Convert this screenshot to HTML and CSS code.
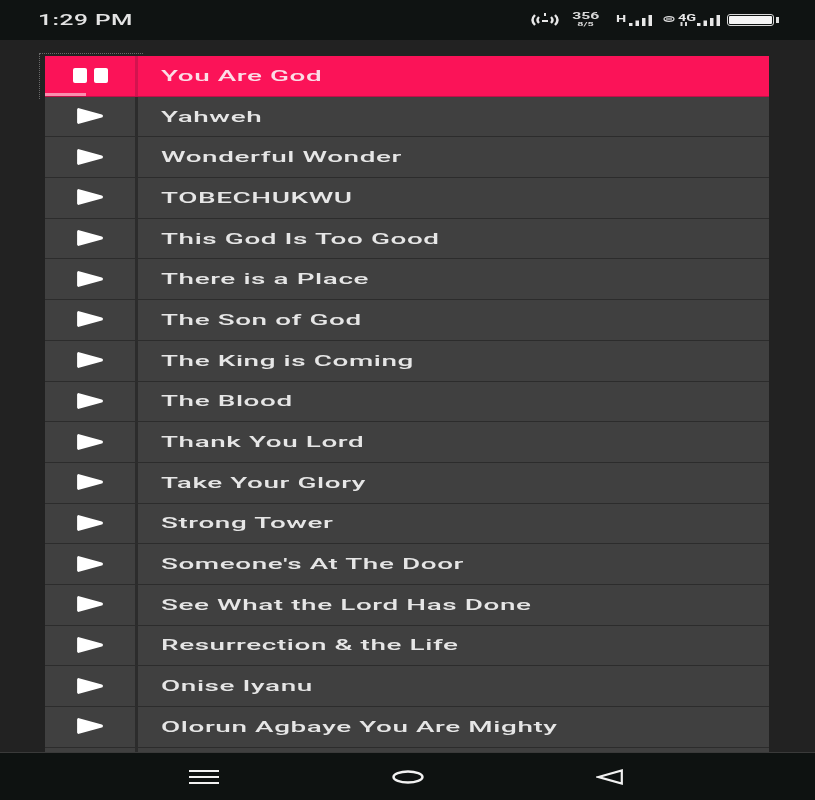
FILE: index.html
```html
<!DOCTYPE html>
<html lang="en">
<head>
    <meta charset="UTF-8">
    <meta name="viewport" content="width=device-width, initial-scale=1.0">
    <title>Songs</title>
    <link rel="stylesheet" href="styles.css">
</head>
<body>
    <svg class="defs" width="0" height="0">
        <symbol id="play-icon" viewBox="0 0 26 16">
            <path d="M1.6 1.6L24.4 8L1.6 14.4Z" fill="#fff" stroke="#fff" stroke-width="3" stroke-linejoin="round"/>
        </symbol>
        <symbol id="bars-icon" viewBox="0 0 23 11">
            <rect x="0" y="8" width="3.5" height="3" fill="#e8e8e8"/>
            <rect x="6.5" y="5.5" width="3.5" height="5.5" fill="#e8e8e8"/>
            <rect x="13" y="3" width="3.5" height="8" fill="#e8e8e8"/>
            <rect x="19.5" y="0" width="3.5" height="11" fill="#e8e8e8"/>
        </symbol>
    </svg>
    <div class="screen">
        <div class="status-bar">
            <span class="clock">1:29 PM</span>
            <div class="status-icons">
                <svg class="hotspot" width="32" height="16" viewBox="0 0 32 16">
                    <path d="M6 3 Q1 8 6 13 M10 5 Q7 8 10 11 M22 5 Q25 8 22 11 M26 3 Q31 8 26 13" fill="none" stroke="#e8e8e8" stroke-width="2.4"/>
                    <rect x="15" y="1" width="2" height="3" fill="#e8e8e8"/>
                    <rect x="13" y="8" width="6" height="2" fill="#e8e8e8"/>
                </svg>
                <div class="speed">
                    <span class="speed-top">356</span>
                    <span class="speed-bottom">8/5</span>
                </div>
                <div class="signal signal-h">
                    <span class="net">H</span>
                    <svg class="bars"><use href="#bars-icon"/></svg>
                </div>
                <div class="signal signal-4g">
                    <svg class="volte" width="12" height="6" viewBox="0 0 12 6">
                        <ellipse cx="6" cy="3" rx="5" ry="2.3" fill="none" stroke="#e0e0e0" stroke-width="1.2"/>
                        <path d="M3 3H9" stroke="#e0e0e0" stroke-width="1.2"/>
                    </svg>
                    <div class="net-stack">
                        <span class="net">4G</span>
                        <svg class="net-arrows" width="8" height="4" viewBox="0 0 8 4">
                            <path d="M1.5 0V4 M6 0V4" stroke="#d8d8d8" stroke-width="2"/>
                        </svg>
                    </div>
                    <svg class="bars"><use href="#bars-icon"/></svg>
                </div>
                <div class="battery">
                    <div class="battery-body"><div class="battery-fill"></div></div>
                    <div class="battery-tip"></div>
                </div>
            </div>
        </div>

        <div class="content">
            <ul class="song-list">
                <li class="song active">
                    <div class="song-btn">
                        <div class="pause"><i></i><i></i></div>
                        <div class="progress"></div>
                        <div class="focus-box"></div>
                    </div>
                    <div class="song-title"><span>You Are God</span></div>
                </li>
                <li class="song">
                    <div class="song-btn"><svg class="play"><use href="#play-icon"/></svg></div>
                    <div class="song-title"><span>Yahweh</span></div>
                </li>
                <li class="song">
                    <div class="song-btn"><svg class="play"><use href="#play-icon"/></svg></div>
                    <div class="song-title"><span>Wonderful Wonder</span></div>
                </li>
                <li class="song">
                    <div class="song-btn"><svg class="play"><use href="#play-icon"/></svg></div>
                    <div class="song-title"><span>TOBECHUKWU</span></div>
                </li>
                <li class="song">
                    <div class="song-btn"><svg class="play"><use href="#play-icon"/></svg></div>
                    <div class="song-title"><span>This God Is Too Good</span></div>
                </li>
                <li class="song">
                    <div class="song-btn"><svg class="play"><use href="#play-icon"/></svg></div>
                    <div class="song-title"><span>There is a Place</span></div>
                </li>
                <li class="song">
                    <div class="song-btn"><svg class="play"><use href="#play-icon"/></svg></div>
                    <div class="song-title"><span>The Son of God</span></div>
                </li>
                <li class="song">
                    <div class="song-btn"><svg class="play"><use href="#play-icon"/></svg></div>
                    <div class="song-title"><span>The King is Coming</span></div>
                </li>
                <li class="song">
                    <div class="song-btn"><svg class="play"><use href="#play-icon"/></svg></div>
                    <div class="song-title"><span>The Blood</span></div>
                </li>
                <li class="song">
                    <div class="song-btn"><svg class="play"><use href="#play-icon"/></svg></div>
                    <div class="song-title"><span>Thank You Lord</span></div>
                </li>
                <li class="song">
                    <div class="song-btn"><svg class="play"><use href="#play-icon"/></svg></div>
                    <div class="song-title"><span>Take Your Glory</span></div>
                </li>
                <li class="song">
                    <div class="song-btn"><svg class="play"><use href="#play-icon"/></svg></div>
                    <div class="song-title"><span>Strong Tower</span></div>
                </li>
                <li class="song">
                    <div class="song-btn"><svg class="play"><use href="#play-icon"/></svg></div>
                    <div class="song-title"><span>Someone's At The Door</span></div>
                </li>
                <li class="song">
                    <div class="song-btn"><svg class="play"><use href="#play-icon"/></svg></div>
                    <div class="song-title"><span>See What the Lord Has Done</span></div>
                </li>
                <li class="song">
                    <div class="song-btn"><svg class="play"><use href="#play-icon"/></svg></div>
                    <div class="song-title"><span>Resurrection &amp; the Life</span></div>
                </li>
                <li class="song">
                    <div class="song-btn"><svg class="play"><use href="#play-icon"/></svg></div>
                    <div class="song-title"><span>Onise Iyanu</span></div>
                </li>
                <li class="song">
                    <div class="song-btn"><svg class="play"><use href="#play-icon"/></svg></div>
                    <div class="song-title"><span>Olorun Agbaye You Are Mighty</span></div>
                </li>
                <li class="song">
                    <div class="song-btn"></div>
                    <div class="song-title"></div>
                </li>
            </ul>
        </div>

        <div class="nav-bar">
            <svg width="30" height="14" viewBox="0 0 30 14">
                <path d="M0 1H30 M0 7H30 M0 13H30" stroke="#f2f2f2" stroke-width="2"/>
            </svg>
            <svg width="32" height="14" viewBox="0 0 32 14">
                <ellipse cx="16" cy="7" rx="14.5" ry="5.5" fill="none" stroke="#f2f2f2" stroke-width="2.4"/>
            </svg>
            <svg width="27" height="16" viewBox="0 0 27 16">
                <path d="M2.5 8L25.8 1.5V14.5Z" fill="none" stroke="#f2f2f2" stroke-width="2.2"/>
            </svg>
        </div>
    </div>
</body>
</html>
```

FILE: styles.css
```css
* {
    box-sizing: border-box;
}
body {
    margin: 0;
    background: #222222;
    font-family: Roboto, "Liberation Sans", sans-serif;
    color: #eeeeee;
}
.defs {
    position: absolute;
}
.screen {
    display: flex;
    flex-direction: column;
    height: 800px;
    overflow: hidden;
}
.status-bar {
    flex: 0 0 40px;
    display: flex;
    justify-content: space-between;
    align-items: center;
    background: #0f1312;
    padding: 0 36px 0 38px;
}
.clock {
    display: inline-block;
    font-size: 14px;
    font-weight: 500;
    letter-spacing: 0.3px;
    transform: scaleX(1.75);
    transform-origin: left center;
    color: #e4e4e4;
    filter: blur(0.3px);
}
.status-icons {
    display: flex;
    align-items: center;
}
.speed {
    width: 27px;
    display: flex;
    flex-direction: column;
    align-items: center;
    margin-left: 11px;
    font-weight: 700;
    line-height: 7px;
    color: #d8d8d8;
    filter: blur(0.3px);
}
.speed-top {
    font-size: 9px;
    transform: scaleX(1.75);
}
.speed-bottom {
    font-size: 6px;
    transform: scaleX(1.8);
}
.signal {
    display: flex;
    align-items: flex-end;
    height: 11px;
}
.signal-h {
    width: 36px;
    margin-left: 17px;
}
.signal-4g {
    width: 57px;
    margin-left: 11px;
}
.bars {
    width: 23px;
    height: 11px;
    margin-left: auto;
}
.net {
    align-self: flex-start;
    font-size: 9px;
    font-weight: 700;
    line-height: 8px;
    transform: scaleX(1.6);
    transform-origin: left center;
    color: #e8e8e8;
    filter: blur(0.3px);
}
.volte {
    align-self: flex-start;
    margin-top: 1px;
}
.net-stack {
    display: flex;
    flex-direction: column;
    margin-left: 3px;
}
.net-arrows {
    margin-left: 2px;
}
.battery {
    display: flex;
    align-items: center;
    margin-left: 7px;
}
.battery-body {
    width: 47px;
    height: 12px;
    border: 1.5px solid #d8d8d8;
    border-radius: 3px;
    padding: 1px;
}
.battery-fill {
    height: 100%;
    background: #f6f6f6;
    border-radius: 1px;
}
.battery-tip {
    width: 3px;
    height: 6px;
    margin-left: 2px;
    background: #e0e0e0;
}
.content {
    flex: 1;
    min-height: 0;
    overflow: hidden;
    padding: 16px 46px 0 45px;
    background: #222222;
}
.song-list {
    list-style: none;
    margin: 0;
    padding: 0;
}
.song {
    display: flex;
    height: 40.7px;
    background: #404040;
    border-bottom: 1.5px solid #2c2c2c;
}
.song-btn {
    position: relative;
    flex: 0 0 93px;
    display: flex;
    justify-content: center;
    align-items: center;
    border-right: 3px solid #2c2c2c;
}
.song-title {
    flex: 1;
    display: flex;
    align-items: center;
    padding-left: 23px;
    font-size: 14px;
    font-weight: 500;
    color: #e6e6e6;
}
.song-title span {
    display: inline-block;
    white-space: nowrap;
    letter-spacing: 0.3px;
    transform: scaleX(1.99);
    transform-origin: left center;
    filter: blur(0.3px);
}
.play {
    width: 26px;
    height: 16px;
    margin-top: -1px;
}
.pause {
    display: flex;
    gap: 7px;
    margin-top: -1px;
}
.pause i {
    width: 14px;
    height: 15px;
    background: #ffffff;
    border-radius: 2px;
}
.song.active {
    background: #fb1358;
    border-bottom-color: #c01048;
}
.song.active .song-btn {
    border-right-color: #d3134f;
}
.song.active .song-title {
    color: #fbdde6;
}
.progress {
    position: absolute;
    left: 0;
    bottom: 0;
    width: 41px;
    height: 3px;
    background: #fa8fae;
}
.focus-box {
    position: absolute;
    left: -6px;
    top: -3px;
    right: -8px;
    bottom: -3px;
    border-left: 1px dotted #6a6a6a;
    border-top: 1px dotted #6a6a6a;
}
.nav-bar {
    flex: 0 0 48px;
    display: flex;
    justify-content: space-between;
    align-items: center;
    padding: 0 192px 0 189px;
    background: #0e1211;
    border-top: 1px solid #3a3a3a;
}
```
